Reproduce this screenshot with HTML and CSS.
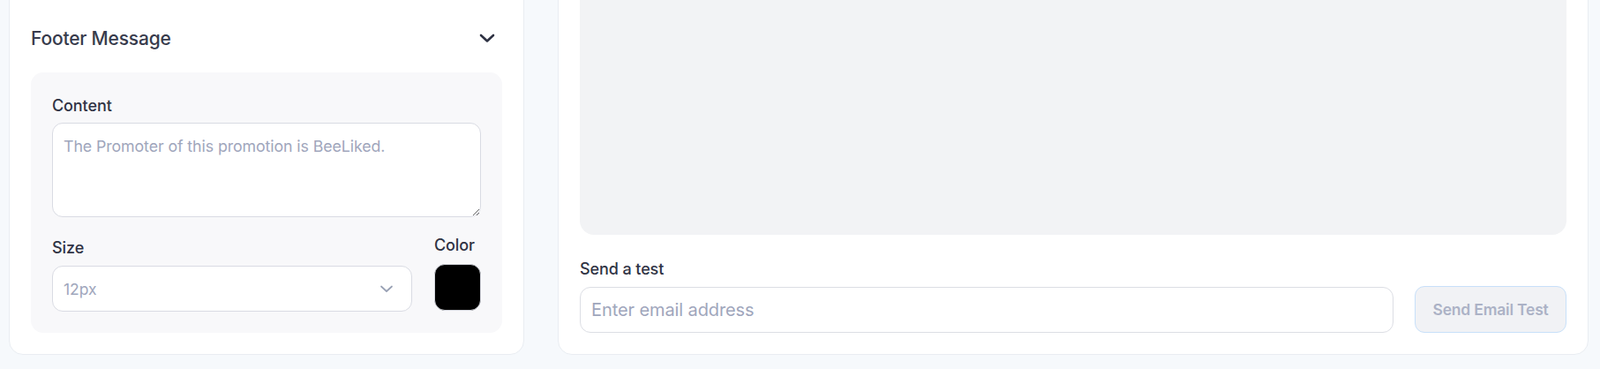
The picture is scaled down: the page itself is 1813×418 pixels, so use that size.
FILE: index.html
```html
<!DOCTYPE html>
<html lang="en">
<head>
	<meta charset="UTF-8">
	<title>Email Settings</title>
	<link rel="stylesheet" href="styles.css">
</head>
<body>

	<div class="layout">
		<section class="card settings">
			<div class="section-head">
				<h3>Footer Message</h3>
				<button class="toggle" type="button">
					<svg width="18" height="11" viewBox="0 0 18 11"><path d="M2 2 L9 8.5 L16 2" fill="none" stroke="#2e3243" stroke-width="2.6" stroke-linecap="round" stroke-linejoin="round"/></svg>
				</button>
			</div>
			<div class="panel">
				<label class="field-label content-label" for="footer-content">Content</label>
				<textarea id="footer-content" placeholder="The Promoter of this promotion is BeeLiked."></textarea>
				<div class="style-row">
					<div class="size-field">
						<label class="field-label">Size</label>
						<div class="select">
							<span>12px</span>
							<svg width="16" height="9" viewBox="0 0 16 9"><path d="M2 1.5 L8 7 L14 1.5" fill="none" stroke="#98a0b4" stroke-width="1.7" stroke-linecap="round" stroke-linejoin="round"/></svg>
						</div>
					</div>
					<div class="color-field">
						<label class="field-label">Color</label>
						<div class="swatch"></div>
					</div>
				</div>
			</div>
		</section>

		<section class="card preview-card">
			<div class="preview"></div>
			<label class="field-label test-label" for="test-email">Send a test</label>
			<div class="test-row">
				<input id="test-email" type="email" placeholder="Enter email address">
				<button class="send-btn" type="button" disabled>Send Email Test</button>
			</div>
		</section>
	</div>

</body>
</html>
```

FILE: styles.css
```css
html, body {
	overscroll-behavior: none;
}
body {
	margin: 0;
	background: #f6f9fc;
	font-family: Inter, "Noto Sans", sans-serif;
	color: #2c3040;
	overflow: hidden;
}
/* page is scrolled down, cards start above the fold */
.layout {
	display: grid;
	grid-template-columns: 1fr 2fr;
	gap: 38px;
	margin-top: -48px;
	padding: 0 13px 0 10px;
}
.card {
	background: #fff;
	border: 1px solid #e9edf2;
	border-radius: 16px;
	padding: 24px;
}

.section-head {
	display: flex;
	align-items: center;
	justify-content: space-between;
	padding-top: 46px;
	height: 40px;
	margin-bottom: 19px;
}
.section-head h3 {
	margin: 0;
	font-size: 21px;
	font-weight: 500;
	color: #373b4c;
	letter-spacing: -0.2px;
}
.toggle {
	border: none;
	background: none;
	padding: 0;
	margin-right: 8px;
	display: flex;
}

.panel {
	background: #f8f8fa;
	border-radius: 14px;
	padding: 24px;
}
.field-label {
	display: block;
	font-size: 18px;
	line-height: 24px;
	font-weight: 500;
	color: #2f3344;
	letter-spacing: -0.1px;
}
.content-label {
	padding-top: 2px;
}
.panel textarea {
	display: block;
	box-sizing: border-box;
	width: 100%;
	height: 107px;
	margin-top: 7px;
	padding: 14px 12px 10px;
	border: 1px solid #d9dbe3;
	border-radius: 12px;
	background: #fff;
	font-family: inherit;
	font-size: 17.8px;
	line-height: 24px;
	color: #2c3040;
	letter-spacing: -0.1px;
}
textarea::placeholder, input::placeholder {
	color: #9fa6bc;
}

.style-row {
	display: flex;
	align-items: flex-end;
	gap: 25px;
	margin-top: 20px;
}
.size-field {
	flex: 1;
}
.select {
	display: flex;
	align-items: center;
	justify-content: space-between;
	box-sizing: border-box;
	height: 52px;
	margin-top: 8px;
	padding: 0 20px 0 12px;
	background: #fff;
	border: 1px solid #d9dbe3;
	border-radius: 12px;
	font-size: 17.5px;
	color: #9fa6bc;
}
.color-field {
	width: 53px;
}
.swatch {
	height: 53px;
	margin: 9px 0 1px;
	background: #000;
	border: 1px solid #d3d5dc;
	border-radius: 12px;
	box-sizing: border-box;
}

.preview {
	height: 289px;
	background: #f2f3f5;
	border-radius: 16px;
}
.test-label {
	margin-top: 27px;
}
.test-row {
	display: flex;
	align-items: center;
	gap: 24px;
	margin-top: 7px;
}
.test-row input {
	flex: 1;
	box-sizing: border-box;
	height: 52px;
	padding: 0 12px;
	border: 1px solid #dcdee4;
	border-radius: 12px;
	font-family: inherit;
	font-size: 20px;
	color: #2c3040;
	outline: none;
	letter-spacing: -0.1px;
}
.send-btn {
	box-sizing: border-box;
	width: 172px;
	height: 53px;
	background: #f1f2f5;
	border: 1px solid #c8e0f9;
	border-radius: 11px;
	font-family: inherit;
	font-size: 17.5px;
	font-weight: 600;
	color: #acb2c6;
	letter-spacing: -0.2px;
}
```
